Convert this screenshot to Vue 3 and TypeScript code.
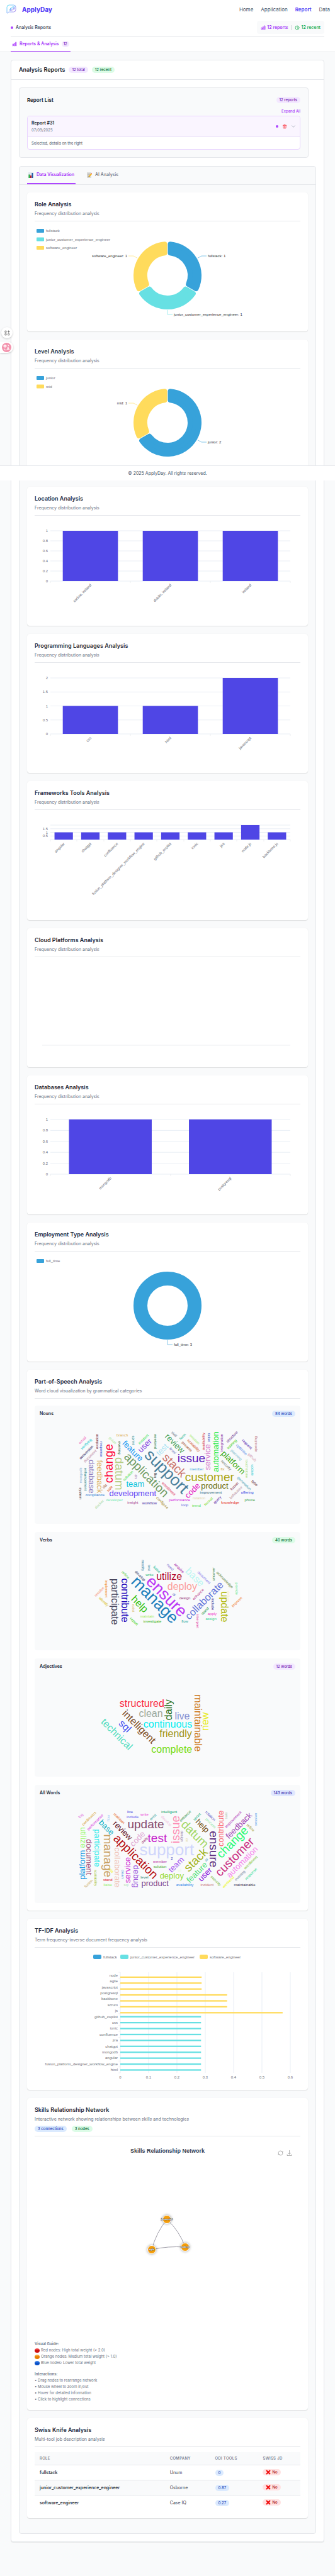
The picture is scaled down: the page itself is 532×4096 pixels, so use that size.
<script setup lang="ts">
type Word = [text: string, x: number, y: number, angle: number, level: number, color: string]

interface Cloud {
  title: string
  count: string
  tone: string
  originY: number
  sizes: number[]
  words: Word[]
}

interface Slice {
  name: string
  value: number
  color: string
}

interface BarChart {
  labels: string[]
  values: number[]
  ticks: number[]
  hidden: number[]
  base: number
}

interface Section {
  title: string
  slices?: Slice[]
  bars?: BarChart
  empty?: boolean
}

const navLinks = ['Home', 'Application', 'Report', 'Data']

const BLUE = '#37a2da'
const TEAL = '#67e0e3'
const YELLOW = '#ffdb5c'

const sections: Section[] = [
  {
    title: 'Role Analysis',
    slices: [
      { name: 'fullstack', value: 1, color: BLUE },
      { name: 'junior_customer_experience_engineer', value: 1, color: TEAL },
      { name: 'software_engineer', value: 1, color: YELLOW },
    ],
  },
  {
    title: 'Level Analysis',
    slices: [
      { name: 'junior', value: 2, color: BLUE },
      { name: 'mid', value: 1, color: YELLOW },
    ],
  },
  {
    title: 'Location Analysis',
    bars: {
      labels: ['carlow, ireland', 'dublin, ireland', 'ireland'],
      values: [1, 1, 1],
      ticks: [0, 0.2, 0.4, 0.6, 0.8, 1],
      hidden: [],
      base: 96,
    },
  },
  {
    title: 'Programming Languages Analysis',
    bars: {
      labels: ['css', 'html', 'javascript'],
      values: [1, 1, 2],
      ticks: [0, 0.5, 1, 1.5, 2],
      hidden: [],
      base: 105,
    },
  },
  {
    title: 'Frameworks Tools Analysis',
    bars: {
      labels: ['angular', 'chatgpt', 'confluence', 'fusion_platform_designer_workflow_engine', 'github_copilot', 'ionic', 'jira', 'node.js', 'backbone.js'],
      values: [1, 1, 1, 1, 1, 1, 1, 2, 1],
      ticks: [0, 0.5, 1, 1.5, 2],
      hidden: [0, 2],
      base: 39,
    },
  },
  { title: 'Cloud Platforms Analysis', empty: true },
  {
    title: 'Databases Analysis',
    bars: {
      labels: ['mongodb', 'postgresql'],
      values: [1, 1],
      ticks: [0, 0.2, 0.4, 0.6, 0.8, 1],
      hidden: [],
      base: 103,
    },
  },
  { title: 'Employment Type Analysis', slices: [{ name: 'full_time', value: 3, color: BLUE }] },
]

/* ---- donut charts ---- */
const CX = 211
const CY = 78
const OUTER = 54
const INNER = 32
const ROUND = 4

function slicePath(start: number, end: number): string {
  const r1 = OUTER - ROUND
  const r0 = INNER + ROUND
  const edge = ROUND + 0.5
  const o = Math.asin(edge / r1)
  const i = Math.asin(edge / r0)
  const at = (r: number, a: number) => `${(CX + r * Math.sin(a)).toFixed(2)} ${(CY - r * Math.cos(a)).toFixed(2)}`
  const large = end - start > Math.PI ? 1 : 0
  return `M${at(r1, start + o)}A${r1} ${r1} 0 ${large} 1 ${at(r1, end - o)}L${at(r0, end - i)}A${r0} ${r0} 0 ${large} 0 ${at(r0, start + i)}Z`
}

function donut(slices: Slice[]) {
  const total = slices.reduce((sum, s) => sum + s.value, 0)
  let angle = 0
  return slices.map((s) => {
    const start = angle
    angle += (s.value / total) * Math.PI * 2
    const mid = (start + angle) / 2
    const sx = Math.sin(mid)
    const down = Math.abs(sx) < 0.01
    const side = sx < -0.01 ? -1 : 1
    const x1 = CX + (OUTER + 1) * (down ? 0 : sx)
    const y1 = CY - (OUTER + 1) * Math.cos(mid)
    const x2 = down ? CX : CX + side * 54
    const y2 = down ? 140 : CY - 62 * Math.cos(mid)
    const x3 = x2 + side * 8
    return {
      ...s,
      path: slicePath(start, angle),
      line: `${x1},${y1} ${x2},${y2} ${x3},${y2}`,
      tx: x3 + side * 2,
      ty: y2 + 2,
      anchor: side < 0 ? 'end' : 'start',
    }
  })
}

/* ---- vertical bar charts ---- */
const LEFT = 25
const RIGHT = 406
const TOP = 16

function barY(c: BarChart, v: number): number {
  return c.base - (v / c.ticks[c.ticks.length - 1]) * (c.base - TOP)
}

function bars(c: BarChart) {
  const slot = (RIGHT - LEFT) / c.labels.length
  return c.labels.map((label, i) => ({
    label,
    x: LEFT + slot * (i + 0.155),
    w: slot * 0.69,
    cx: LEFT + slot * (i + 0.5),
    y: barY(c, c.values[i]),
  }))
}

function edges(c: BarChart): number[] {
  const slot = (RIGHT - LEFT) / c.labels.length
  return Array.from({ length: c.labels.length + 1 }, (_, i) => Math.round(LEFT + slot * i))
}

/* ---- TF-IDF ---- */
const terms: [string, number][] = [
  ['node', 0.287], ['agile', 0.287], ['javascript', 0.287], ['postgresql', 0.377], ['backbone', 0.377],
  ['scrum', 0.377], ['js', 0.573], ['github_copilot', 0.285], ['css', 0.285], ['ionic', 0.285],
  ['confluence', 0.285], ['jira', 0.285], ['chatgpt', 0.285], ['mongodb', 0.285], ['angular', 0.285],
  ['fusion_platform_designer_workflow_engine', 0.285], ['html', 0.285],
]
const TERM_X = 136
const TERM_TOP = 31
const TERM_STEP = 160 / 17
const termRows = terms.map(([name, v], i) => ({
  name,
  w: (v / 0.6) * 270,
  y: TERM_TOP + TERM_STEP * (i + 0.5),
  shift: i < 7 ? 3 : 0,
  color: i < 7 ? YELLOW : TEAL,
}))
const termLegend = [
  { name: 'fullstack', x: 93, color: BLUE },
  { name: 'junior_customer_experience_engineer', x: 136, color: TEAL },
  { name: 'software_engineer', x: 262, color: YELLOW },
]

/* ---- network ---- */
const nodes = [
  { name: 'javascript', x: 210, y: 124 },
  { name: 'agile', x: 186, y: 172 },
  { name: 'node.js', x: 239, y: 168 },
]

/* ---- word clouds: words sit on a fine layout grid, scaled to the canvas ---- */
const GRID_X = 0.2967
const GRID_Y = 0.1722
const GRID_LEFT = 73

function place(cloud: Cloud) {
  return cloud.words.map(([text, x, y, angle, level, color]) => {
    const size = cloud.sizes[level]
    const rise = /[bdfhklit0-9]/.test(text) ? 0.72 : 0.53
    const drop = /[gjpqy]/.test(text) ? 0.21 : 0
    return {
      text,
      size,
      color,
      dy: (size * (rise - drop)) / 2,
      at: `translate(${((x - GRID_LEFT) * GRID_X).toFixed(1)} ${((y - cloud.originY) * GRID_Y).toFixed(1)}) rotate(${angle})`,
    }
  })
}

const clouds: Cloud[] = [
  {
    title: 'Nouns',
    count: '84 words',
    tone: 'blue',
    originY: 168,
    sizes: [6, 13, 19, 26],
    words: [
      ['support', 748, 638, 45, 3, '#4a7f9b'], ['change', 449, 557, -90, 2, '#ff0033'], ['datum', 500, 652, 90, 2, '#b5cc85'],
      ['application', 641, 668, 45, 2, '#6f9a62'], ['issue', 885, 507, 0, 2, '#5b1bbd'], ['customer', 982, 680, 0, 2, '#a9a312'],
      ['stack', 795, 572, 45, 2, '#c9736a'], ['database', 350, 678, 90, 1, '#8e7cc0'], ['feedback', 396, 678, 90, 1, '#d9b36c'],
      ['feature', 572, 440, 45, 1, '#0d95f2'], ['user', 638, 395, -45, 1, '#8243e0'], ['test', 728, 428, -45, 1, '#a5e3f3'],
      ['review', 797, 370, 45, 1, '#3fa055'], ['service', 972, 498, -90, 1, '#d67fd0'], ['automation', 1015, 449, -90, 1, '#2aec4b'],
      ['platform', 1107, 553, 45, 1, '#35a80c'], ['team', 585, 745, 0, 1, '#09c3dc'], ['development', 571, 840, 0, 1, '#6144f5'],
      ['product', 1010, 770, 0, 1, '#6d6c0c'], ['code', 890, 806, -45, 1, '#e51ac4'], ['email', 302, 343, -45, 0, '#f06fc0'],
      ['verifying', 323, 380, -45, 0, '#22c9cf'], ['evolution', 379, 354, -90, 0, '#6b0d1b'], ['response', 400, 426, 90, 0, '#2b4fd0'],
      ['conversion', 322, 454, -45, 0, '#1d1556'], ['document', 343, 488, -45, 0, '#bd8aa5'], ['guide', 463, 346, 45, 0, '#b2e8a9'],
      ['branch', 515, 297, 0, 0, '#d9a93f'], ['evening', 498, 413, 90, 0, '#114f27'], ['sprint', 575, 341, 90, 0, '#168a88'],
      ['incident', 628, 333, -45, 0, '#4be46c'], ['weekend', 693, 354, 90, 0, '#1f7a40'], ['skill', 793, 286, 45, 0, '#62778c'],
      ['form', 838, 308, -45, 0, '#2ab58d'], ['level', 785, 438, 45, 0, '#6a72b8'], ['process', 859, 405, 45, 0, '#9b4623'],
      ['session', 903, 334, 45, 0, '#a6ea71'], ['scalability', 896, 393, 45, 0, '#d3561f'], ['availability', 950, 353, -90, 0, '#cf1230'],
      ['ticket', 981, 318, 90, 0, '#3553c4'], ['integration', 1047, 366, -90, 0, '#8127a0'], ['structure', 1102, 310, -45, 0, '#5a1e88'],
      ['training', 1103, 381, -45, 0, '#44cf20'], ['optimise', 1153, 430, 45, 0, '#5b8be8'], ['planning', 1124, 479, 45, 0, '#7ab8c9'],
      ['request', 1182, 381, 45, 0, '#5221ad'], ['operating', 1230, 378, -90, 0, '#b76b75'], ['github', 1209, 502, 45, 0, '#d39bb0'],
      ['touchstone', 1182, 606, 90, 0, '#a6dd7d'], ['update', 1209, 618, 90, 0, '#1ecbd0'], ['security', 1070, 574, 45, 0, '#76796a'],
      ['member', 913, 609, 0, 0, '#48a8dc'], ['fix', 1052, 609, 0, 0, '#d19b1c'], ['mongodb', 294, 667, -90, 0, '#84b3d6'],
      ['enhancement', 318, 702, 90, 0, '#14777a'], ['system', 289, 834, 90, 0, '#3b2020'], ['sla', 420, 766, -45, 0, '#9d4c27'],
      ['sale', 447, 790, -45, 0, '#e0521d'], ['solution', 546, 670, -45, 0, '#4be04b'], ['up', 588, 678, -90, 0, '#8460a0'],
      ['log', 692, 667, -90, 0, '#14201c'], ['compliance', 369, 850, 0, 0, '#2d78d1'], ['developer', 473, 898, 0, 0, '#6fe9b6'],
      ['docker', 392, 933, -45, 0, '#b0dbaa'], ['insight', 571, 921, 0, 0, '#a1398f'], ['workflow', 661, 921, 0, 0, '#3a1b9b'],
      ['configure', 729, 921, 45, 0, '#a3831c'], ['enrollment', 764, 790, 45, 0, '#dd2a58'], ['performance', 822, 898, 0, 0, '#cf21e0'],
      ['loop', 850, 945, 0, 0, '#5b67e0'], ['trend', 912, 945, 0, 0, '#50e04b'], ['rotation', 926, 873, 0, 0, '#ddd2ac'],
      ['format', 976, 908, -45, 0, '#7fdc38'], ['query', 1026, 897, -45, 0, '#5a24a3'], ['improvement', 989, 825, 0, 0, '#1e6578'],
      ['knowledge', 1093, 921, 0, 0, '#e1261c'], ['behaviour', 1123, 825, -45, 0, '#b78c99'], ['fusion', 1115, 766, -45, 0, '#7f2a47'],
      ['generation', 1167, 743, 45, 0, '#4b9fb5'], ['offering', 1184, 825, 0, 0, '#1c38e0'], ['type', 1223, 740, 45, 0, '#5c1730'],
      ['phone', 1198, 898, 0, 0, '#3fa447'],
    ],
  },
  {
    title: 'Verbs',
    count: '40 words',
    tone: 'green',
    originY: 192,
    sizes: [6, 16, 26],
    words: [
      ['manage', 679, 690, 45, 2, '#1e7fbd'], ['ensure', 749, 647, 45, 2, '#bb37f5'], ['participate', 471, 690, 90, 1, '#49465d'],
      ['contribute', 530, 677, 90, 1, '#2408bb'], ['utilize', 766, 457, 0, 1, '#b3082c'], ['deploy', 836, 560, 0, 1, '#fb9d9b'],
      ['base', 905, 462, 45, 1, '#bcf6f2'], ['collaborate', 953, 677, -45, 1, '#6173d9'], ['deliver', 1085, 641, 90, 0, '#fbf0b8'],
      ['update', 1058, 738, 90, 1, '#b1b808'], ['help', 606, 717, 45, 1, '#2fc20d'], ['modify', 624, 355, 90, 0, '#22759b'],
      ['test', 659, 378, 90, 0, '#4390a8'], ['liaise', 701, 391, 45, 0, '#1dbb98'], ['need', 772, 370, 45, 0, '#8079d3'],
      ['acquire', 819, 382, 45, 0, '#a20f9f'], ['refine', 533, 441, 45, 0, '#58ca47'], ['develop', 610, 454, 45, 0, '#2d3366'],
      ['write', 661, 441, 0, 0, '#28b77b'], ['document', 953, 466, 45, 0, '#8580ec'], ['uncover', 1006, 437, -90, 0, '#2a7c39'],
      ['acknowledge', 1063, 490, 45, 0, '#64853a'], ['provide', 1125, 570, 90, 0, '#62e78f'], ['implement', 429, 570, 90, 0, '#f18a1d'],
      ['resolve', 392, 598, -45, 0, '#f58b70'], ['identify', 415, 692, 45, 0, '#d8bd26'], ['enhance', 921, 622, -45, 0, '#bc4089'],
      ['ai', 793, 622, 45, 0, '#4457c4'], ['design', 850, 657, 0, 0, '#8f327d'], ['include', 1001, 713, 90, 0, '#1a1592'],
      ['stand', 957, 776, -45, 0, '#26984a'], ['apply', 996, 802, 0, 0, '#f037c7'], ['assign', 990, 850, 0, 0, '#36d18e'],
      ['interpret', 917, 870, 90, 0, '#e035a0'], ['flow', 850, 873, 0, 0, '#21a59b'], ['exist', 575, 749, 90, 0, '#d5b763'],
      ['maintain', 648, 825, 0, 0, '#98ea58'], ['investigate', 676, 873, 0, 0, '#2fb00b'], ['report', 577, 874, 45, 0, '#3fd214'],
      ['improve', 1130, 694, -45, 0, '#f0813a'],
    ],
  },
  {
    title: 'Adjectives',
    count: '12 words',
    tone: 'purple',
    originY: 186,
    sizes: [16],
    words: [
      ['structured', 620, 452, 0, 0, '#f92a42'], ['daily', 768, 515, -90, 0, '#28701a'], ['clean', 668, 547, 0, 0, '#9aa79b'],
      ['live', 836, 570, 0, 0, '#8490d2'], ['maintainable', 922, 637, 90, 0, '#ce7a1f'], ['new', 963, 623, -90, 0, '#e8eb2d'],
      ['continuous', 759, 645, 0, 0, '#04eef0'], ['friendly', 801, 745, 0, 0, '#9d9213'], ['intelligent', 602, 677, 45, 0, '#7b4a23'],
      ['sql', 527, 671, 45, 0, '#3e49f0'], ['technical', 487, 738, 45, 0, '#52ddc0'], ['complete', 780, 888, 0, 0, '#78dc0b'],
    ],
  },
  {
    title: 'All Words',
    count: '143 words',
    tone: 'indigo',
    originY: 240,
    sizes: [6, 13, 19, 26],
    words: [
      ['support', 753, 705, 0, 3, '#d0d6fb'], ['update', 641, 467, 0, 2, '#874c6d'], ['test', 703, 582, 0, 2, '#c519cb'],
      ['issue', 797, 508, -90, 2, '#fd8db6'], ['datum', 905, 548, 45, 2, '#a3d866'], ['ensure', 1000, 689, 90, 2, '#5b2b80'],
      ['change', 1108, 631, -45, 2, '#28fb74'], ['customer', 1115, 758, -45, 2, '#c92c80'], ['stack', 908, 785, -45, 2, '#a2b321'],
      ['application', 584, 763, 45, 2, '#b70d10'], ['manage', 428, 750, 90, 2, '#c9a063'], ['base', 432, 487, 45, 1, '#0fafc3'],
      ['review', 518, 515, 45, 1, '#5c0b20'], ['code', 596, 592, -45, 1, '#dfa8d4'], ['help', 942, 477, 45, 1, '#6a4707'],
      ['contribute', 1043, 498, -90, 1, '#fb6f7b'], ['feedback', 1138, 470, -45, 1, '#a145b3'], ['automation', 1156, 806, -45, 1, '#f683ec'],
      ['team', 803, 830, -45, 1, '#a04ff0'], ['feature', 914, 902, -45, 1, '#4be072'], ['user', 960, 925, -45, 1, '#8209dd'],
      ['deploy', 780, 938, 0, 1, '#96da38'], ['product', 690, 1012, 0, 1, '#7a418a'], ['debug', 586, 940, 90, 1, '#a45fdd'],
      ['service', 542, 882, -90, 1, '#ce2fd6'], ['collaborate', 490, 857, 90, 1, '#f0c5b9'], ['participate', 376, 678, 90, 1, '#34eaea'],
      ['document', 338, 762, 90, 1, '#a8577b'], ['utilize', 308, 582, 90, 1, '#a3f976'], ['platform', 305, 833, -90, 1, '#1f9ce4'],
      ['log', 294, 382, -45, 0, '#e06fdd'], ['continuous', 337, 405, -45, 0, '#d59a29'], ['performance', 371, 442, -45, 0, '#d532dd'],
      ['flow', 441, 402, -90, 0, '#97c8f8'], ['maintain', 499, 405, 45, 0, '#e66220'], ['live', 557, 345, 0, 0, '#3944e0'],
      ['include', 570, 393, 0, 0, '#5b52f0'], ['write', 634, 369, 0, 0, '#e93ad7'], ['exist', 679, 392, -45, 0, '#44a9a3'],
      ['develop', 750, 430, 45, 0, '#f1bde0'], ['intelligent', 766, 347, 0, 0, '#0ea36a'], ['enhance', 852, 382, -45, 0, '#2e9040'],
      ['sprint', 916, 392, -45, 0, '#2cb387'], ['rotation', 987, 381, 45, 0, '#5650c6'], ['process', 986, 453, 45, 0, '#94e7a8'],
      ['sale', 1069, 378, -90, 0, '#b5c7b5'], ['improvement', 1110, 417, -45, 0, '#b02fb5'], ['session', 1230, 413, -90, 0, '#5aa5ea'],
      ['refine', 1202, 489, 45, 0, '#a29a3a'], ['design', 834, 569, 90, 0, '#8a74a0'], ['up', 861, 606, -90, 0, '#e3ddae'],
      ['daily', 636, 609, -45, 0, '#a4407c'], ['2', 780, 776, 0, 0, '#3b3dbb'], ['member', 717, 801, 0, 0, '#b3249e'],
      ['solution', 717, 850, 0, 0, '#45a52a'], ['ai', 964, 786, -45, 0, '#4497b5'], ['fix', 823, 885, -45, 0, '#eafce0'],
      ['enrollment', 1202, 812, -45, 0, '#83c43c'], ['response', 1206, 922, -45, 0, '#34dd97'], ['evening', 1146, 934, -45, 0, '#7589a4'],
      ['weekend', 1082, 992, -45, 0, '#eaf80d'], ['security', 1015, 982, 45, 0, '#74b638'], ['incident', 969, 1017, 0, 0, '#c47180'],
      ['maintainable', 1170, 1017, 0, 0, '#2f2d50'], ['availability', 850, 1019, 0, 0, '#2b86e8'], ['level', 634, 945, 0, 0, '#307f74'],
      ['clean', 519, 918, 90, 0, '#5397de'], ['sla', 457, 886, 45, 0, '#f4f40a'], ['stand', 438, 969, 0, 0, '#de1234'],
      ['liaise', 438, 1017, 0, 0, '#90ee6f'], ['sql', 536, 1019, 0, 0, '#b6e0b6'], ['scalability', 372, 954, 90, 0, '#9dbd17'],
      ['fusion', 335, 1005, -45, 0, '#c9a95d'],
    ],
  },
]

const guide = [
  { color: 'red', text: 'Red nodes: High total weight (> 2.0)' },
  { color: 'orange', text: 'Orange nodes: Medium total weight (> 1.0)' },
  { color: 'blue', text: 'Blue nodes: Lower total weight' },
]
const interactions = ['Drag nodes to rearrange network', 'Mouse wheel to zoom in/out', 'Hover for detailed information', 'Click to highlight connections']

const jobs = [
  { role: 'fullstack', company: 'Unum', odi: '0' },
  { role: 'junior_customer_experience_engineer', company: 'Osborne', odi: '0.87' },
  { role: 'software_engineer', company: 'Case IQ', odi: '0.27' },
]
</script>

<template>
  <div class="page">
    <header class="topbar">
      <a class="brand" href="#">
        <svg class="logo" viewBox="0 0 32 30" aria-hidden="true">
          <defs>
            <linearGradient id="logo-stroke" x1="0" y1="0" x2="1" y2="1">
              <stop offset="0" stop-color="#3fe0f5" />
              <stop offset="0.5" stop-color="#6b9df8" />
              <stop offset="1" stop-color="#a565e8" />
            </linearGradient>
          </defs>
          <g fill="none" stroke="url(#logo-stroke)" stroke-width="1.6" stroke-linejoin="round">
            <path d="M2 28V9Q2 2 9 2H23Q30 2 30 9V17Q30 24 23 24H9Q6 24 4 27Q2 29 2 28Z" />
            <path d="M9 14v6M13 11.500v8.500M17.500 17v3" stroke-width="1.800" />
            <path d="M21 7.500a5 5 0 1 0 5 5.500h-5z" stroke-width="1.300" />
            <path d="M22.500 6.500v5h5a5 5 0 0 0-5-5z" stroke-width="1.200" />
          </g>
        </svg>
        <span>ApplyDay</span>
      </a>
      <nav class="links">
        <a v-for="link in navLinks" :key="link" href="#" :class="{ current: link === 'Report' }">{{ link }}</a>
      </nav>
    </header>

    <div class="subbar">
      <div class="status">
        <span class="status-name"><i class="dot"></i>Analysis Reports</span>
        <div class="stats">
          <span class="stat purple-text">
            <svg class="icon" viewBox="0 0 24 24"><path d="M3 13.100c0-.6.500-1.100 1.100-1.100h2.300c.6 0 1.100.5 1.100 1.100v6.800c0 .6-.5 1.100-1.100 1.100H4.100A1.100 1.100 0 0 1 3 19.900zM9.750 8.600c0-.6.500-1.100 1.100-1.100h2.300c.6 0 1.100.5 1.100 1.100v11.300c0 .6-.5 1.100-1.100 1.100h-2.300a1.100 1.100 0 0 1-1.100-1.100zM16.500 4.100c0-.6.500-1.100 1.100-1.100h2.300c.6 0 1.100.5 1.100 1.100v15.800c0 .6-.5 1.100-1.100 1.100h-2.300a1.100 1.100 0 0 1-1.100-1.100z" /></svg>
            12 reports
          </span>
          <i class="bar"></i>
          <span class="stat green-text">
            <svg class="icon" viewBox="0 0 24 24"><path d="M12 6v6l3 5M21 12a9 9 0 1 1-18 0 9 9 0 0 1 18 0z" /></svg>
            12 recent
          </span>
        </div>
      </div>
      <div class="main-tabs">
        <button class="main-tab" type="button">
          <svg class="icon" viewBox="0 0 24 24"><path d="M3 13.100c0-.6.500-1.100 1.100-1.100h2.300c.6 0 1.100.5 1.100 1.100v6.800c0 .6-.5 1.100-1.100 1.100H4.100A1.100 1.100 0 0 1 3 19.900zM9.750 8.600c0-.6.500-1.100 1.100-1.100h2.300c.6 0 1.100.5 1.100 1.100v11.300c0 .6-.5 1.100-1.100 1.100h-2.300a1.100 1.100 0 0 1-1.100-1.100zM16.500 4.100c0-.6.500-1.100 1.100-1.100h2.300c.6 0 1.100.5 1.100 1.100v15.800c0 .6-.5 1.100-1.100 1.100h-2.300a1.100 1.100 0 0 1-1.100-1.100z" /></svg>
          <span>Reports &amp; Analysis</span>
          <span class="count">12</span>
        </button>
      </div>
    </div>

    <main class="main">
      <section class="shell">
        <div class="shell-head">
          <h1>Analysis Reports</h1>
          <span class="pill purple">12 total</span>
          <span class="pill green">12 recent</span>
        </div>

        <div class="shell-body">
          <section class="list">
            <div class="list-head">
              <h2>Report List</h2>
              <span class="pill purple">12 reports</span>
            </div>
            <button class="expand" type="button">Expand All</button>
            <article class="report">
              <div class="report-head">
                <div>
                  <h3>Report #31</h3>
                  <p>07/09/2025</p>
                </div>
                <div class="report-actions">
                  <i class="dot"></i>
                  <button type="button" aria-label="Delete report">
                    <svg class="icon red" viewBox="0 0 24 24"><path d="M19 7l-.9 12.100A2 2 0 0 1 16.100 21H7.900a2 2 0 0 1-2-1.900L5 7m5 4v6m4-6v6m1-10V4a1 1 0 0 0-1-1h-4a1 1 0 0 0-1 1v3M4 7h16" /></svg>
                  </button>
                  <button type="button" aria-label="Toggle report">
                    <svg class="icon grey" viewBox="0 0 24 24"><path d="M5 8l7 8 7-8" /></svg>
                  </button>
                </div>
              </div>
              <p class="report-body">Selected, details on the right</p>
            </article>
          </section>

          <section class="data">
            <div class="data-tabs">
              <button class="data-tab on" type="button">
                <svg class="emoji" viewBox="0 0 16 18" aria-hidden="true">
                  <path d="M0 0h16v18H0z" fill="#dfe7ee" />
                  <path d="M1 7h4v11H1z" fill="#12a32a" />
                  <path d="M6 10h4v8H6z" fill="#c01722" />
                  <path d="M11 2h4v16h-4z" fill="#1a58a8" />
                </svg>
                Data Visualization
              </button>
              <button class="data-tab" type="button">
                <svg class="emoji" viewBox="0 0 16 18" aria-hidden="true">
                  <path d="M0 0h14v18H0z" fill="#dcdcd8" />
                  <path d="M2 4h9M2 7h8M2 10h6M2 13h4" stroke="#a9a9a9" />
                  <path d="M5 15l1-4 7-8 3 3-7 8z" fill="#f6b828" />
                  <path d="M13 3l3 3 0-3-1-1z" fill="#e8677c" />
                  <path d="M5 15l1-3 2 2z" fill="#4b4036" />
                </svg>
                AI Analysis
              </button>
            </div>

            <div class="cards">
              <article v-for="s in sections" :key="s.title" class="card">
                <header class="card-head">
                  <h2>{{ s.title }}</h2>
                  <p>Frequency distribution analysis</p>
                </header>

                <svg v-if="s.slices" class="chart" viewBox="0 0 422 155" role="img" :aria-label="s.title">
                  <g v-for="(item, i) in s.slices" :key="item.name">
                    <rect x="3" :y="4 + i * 13.500" width="12" height="6" rx="1" :fill="item.color" />
                    <text class="axis" x="18" :y="9 + i * 13.500">{{ item.name }}</text>
                  </g>
                  <circle v-if="s.slices.length === 1" :cx="CX" :cy="CY" r="43" fill="none" :stroke="BLUE" stroke-width="22" />
                  <g v-for="item in donut(s.slices)" :key="item.name">
                    <path v-if="s.slices.length > 1" :d="item.path" :fill="item.color" :stroke="item.color" :stroke-width="ROUND * 2" stroke-linejoin="round" />
                    <polyline :points="item.line" fill="none" :stroke="item.color" stroke-width="0.600" />
                    <text class="label" :x="item.tx" :y="item.ty" :text-anchor="item.anchor">{{ item.name }}: {{ item.value }}</text>
                  </g>
                </svg>

                <svg v-else-if="s.bars" class="chart" viewBox="0 0 422 155" role="img" :aria-label="s.title">
                  <g v-for="t in s.bars.ticks" :key="t">
                    <line :x1="LEFT" :x2="RIGHT" :y1="barY(s.bars, t)" :y2="barY(s.bars, t)" stroke="#e0e6f1" stroke-width="0.700" />
                    <text v-if="!s.bars.hidden.includes(t)" class="axis" x="21" :y="barY(s.bars, t) + 2" text-anchor="end">{{ t }}</text>
                  </g>
                  <line v-for="x in edges(s.bars)" :key="x" :x1="x" :x2="x" :y1="s.bars.base" :y2="s.bars.base + 3" stroke="#e5e7eb" stroke-width="0.700" />
                  <g v-for="b in bars(s.bars)" :key="b.label">
                    <rect :x="b.x" :y="b.y" :width="b.w" :height="s.bars.base - b.y" fill="#4f46e5" />
                    <text class="axis" text-anchor="end" :transform="`translate(${b.cx + 2} ${s.bars.base + 7}) rotate(-45)`">{{ b.label }}</text>
                  </g>
                </svg>

                <svg v-else class="chart" viewBox="0 0 422 155" role="img" :aria-label="s.title">
                  <line x1="12" x2="406" y1="132" y2="132" stroke="#e5e7eb" stroke-width="0.700" />
                </svg>
              </article>

              <article class="card">
                <header class="card-head">
                  <h2>Part-of-Speech Analysis</h2>
                  <p>Word cloud visualization by grammatical categories</p>
                </header>
                <div class="clouds">
                  <section v-for="c in clouds" :key="c.title" class="cloud">
                    <div class="cloud-head">
                      <h3>{{ c.title }}</h3>
                      <span class="pill" :class="c.tone">{{ c.count }}</span>
                    </div>
                    <svg viewBox="0 0 406 155" role="img" :aria-label="c.title">
                      <g v-for="w in place(c)" :key="w.text" :transform="w.at">
                        <text text-anchor="middle" :y="w.dy" :font-size="w.size" :fill="w.color">{{ w.text }}</text>
                      </g>
                    </svg>
                  </section>
                </div>
              </article>

              <article class="card">
                <header class="card-head">
                  <h2>TF-IDF Analysis</h2>
                  <p>Term frequency-inverse document frequency analysis</p>
                </header>
                <svg class="chart" viewBox="0 0 422 206" role="img" aria-label="TF-IDF Analysis">
                  <g v-for="l in termLegend" :key="l.name">
                    <rect :x="l.x" y="3" width="13" height="7" rx="2" :fill="l.color" />
                    <text class="axis" :x="l.x + 16" y="9">{{ l.name }}</text>
                  </g>
                  <g v-for="n in 7" :key="n">
                    <line :x1="TERM_X + (n - 1) * 45" :x2="TERM_X + (n - 1) * 45" y1="31" y2="191" stroke="#e0e6f1" stroke-width="0.700" />
                    <text class="axis" :x="TERM_X + (n - 1) * 45" y="200" text-anchor="middle">{{ (n - 1) / 10 }}</text>
                  </g>
                  <line v-for="n in 18" :key="n" x1="133" x2="136" :y1="TERM_TOP + (n - 1) * TERM_STEP" :y2="TERM_TOP + (n - 1) * TERM_STEP" stroke="#e5e7eb" stroke-width="0.600" />
                  <g v-for="t in termRows" :key="t.name">
                    <rect :x="TERM_X" :y="t.y + t.shift - 1" :width="t.w" height="2.300" :fill="t.color" />
                    <text class="axis" x="132" :y="t.y + 2" text-anchor="end">{{ t.name }}</text>
                  </g>
                </svg>
              </article>

              <article class="card">
                <header class="card-head">
                  <h2>Skills Relationship Network</h2>
                  <p>Interactive network showing relationships between skills and technologies</p>
                  <div class="badges">
                    <span class="pill blue">3 connections</span>
                    <span class="pill green">3 nodes</span>
                  </div>
                </header>
                <div class="network">
                  <svg class="chart" viewBox="0 0 422 310" role="img" aria-label="Skills Relationship Network">
                    <text class="net-title" x="211" y="18" text-anchor="middle">Skills Relationship Network</text>
                    <g fill="none" stroke="#84828f" stroke-width="0.800">
                      <path d="M186 172Q193 145 210 124" />
                      <path d="M210 124Q230 142 239 168" />
                      <path d="M186 172Q212 166 239 168" />
                    </g>
                    <g v-for="n in nodes" :key="n.name">
                      <circle class="node" :cx="n.x" :cy="n.y" r="6.500" />
                      <text class="node-name" :x="n.x" :y="n.y + 1" text-anchor="middle">{{ n.name }}</text>
                    </g>
                  </svg>
                  <div class="tools">
                    <button type="button" aria-label="Restore">
                      <svg viewBox="0 0 18 18"><path d="M3 12a7 7 0 0 1 1-8 7 7 0 0 1 11 2M15 6a7 7 0 0 1-1 8 7 7 0 0 1-11-2M1 15l2-3 3 2M17 3l-2 3-3-2" /></svg>
                    </button>
                    <button type="button" aria-label="Save as image">
                      <svg viewBox="0 0 18 18"><path d="M9 0v12M4 8l5 5 5-5M2 13v4h14v-4" /></svg>
                    </button>
                  </div>
                </div>
                <div class="notes">
                  <strong>Visual Guide:</strong>
                  <p v-for="g in guide" :key="g.color"><i class="ball" :class="g.color"></i>{{ g.text }}</p>
                </div>
                <div class="notes">
                  <strong>Interactions:</strong>
                  <p v-for="t in interactions" :key="t">• {{ t }}</p>
                </div>
              </article>

              <article class="card">
                <header class="card-head">
                  <h2>Swiss Knife Analysis</h2>
                  <p>Multi-tool job description analysis</p>
                </header>
                <table class="jobs">
                  <thead>
                    <tr><th>Role</th><th>Company</th><th>ODI Tools</th><th>Swiss JD</th></tr>
                  </thead>
                  <tbody>
                    <tr v-for="j in jobs" :key="j.role">
                      <td class="role">{{ j.role }}</td>
                      <td>{{ j.company }}</td>
                      <td><span class="pill blue">{{ j.odi }}</span></td>
                      <td>
                        <span class="pill red-pill">
                          <svg class="cross" viewBox="0 0 8 8" aria-hidden="true"><path d="M1 1l6 6M7 1L1 7" /></svg>No
                        </span>
                      </td>
                    </tr>
                  </tbody>
                </table>
              </article>
            </div>
          </section>
        </div>
      </section>
    </main>

    <footer class="footer">© 2025 ApplyDay. All rights reserved.</footer>

    <button class="float grid-button" type="button" aria-label="Apps">
      <svg viewBox="0 0 16 16"><path d="M1.500 2h4v4h-4zM1.500 10h4v4h-4zM10 10h4v4h-4z" fill="none" stroke="#777" stroke-width="1.500" /><path d="M12 0l1.200 2.800L16 4l-2.800 1.200L12 8l-1.200-2.800L8 4l2.800-1.200z" fill="#777" /></svg>
    </button>
    <button class="float translate-button" type="button" aria-label="Translate">
      <svg viewBox="0 0 30 30">
        <circle cx="15" cy="15" r="15" fill="#f393ad" />
        <g fill="none" stroke="#fff" stroke-width="2">
          <path d="M6 8.500h8v4H6zM10 5.500v10.500M15.500 23.500l4-10 4 10M17 20.500h5M18 7q4 0 4 4M7 18.500q0 4.500 5 4.500" />
        </g>
      </svg>
    </button>
  </div>
</template>

<style>
body {
  margin: 0;
  background: #f9fafb;
}
</style>

<style scoped>
.page {
  position: relative;
  font-family: Inter, "Liberation Sans", sans-serif;
  font-size: 7px;
  line-height: 10px;
  color: #1e2939;
  background: #f9fafb;
}
.page *,
.page *::before {
  box-sizing: border-box;
}
h1, h2, h3, p {
  margin: 0;
}
button {
  font: inherit;
  color: inherit;
  border: 0;
  padding: 0;
  background: none;
}
svg {
  display: block;
}
a {
  text-decoration: none;
}
.icon {
  width: 8px;
  height: 8px;
  flex: none;
  fill: none;
  stroke: currentColor;
  stroke-width: 2;
  stroke-linecap: round;
  stroke-linejoin: round;
}
.dot {
  width: 4px;
  height: 4px;
  border-radius: 50%;
  background: #ad46ff;
}

/* top bar */
.topbar {
  display: flex;
  align-items: center;
  justify-content: space-between;
  height: 29px;
  padding: 0 8px 0 10px;
  background: #fff;
}
.brand {
  display: flex;
  align-items: center;
  gap: 9px;
  font-size: 10px;
  font-weight: 700;
  color: #4f39f6;
}
.logo {
  width: 16px;
  height: 15px;
}
.links {
  display: flex;
  gap: 12px;
  font-size: 8px;
}
.links a {
  color: #4a5565;
}
.links .current {
  font-weight: 600;
  color: #4f39f6;
}

/* sub bar */
.subbar {
  padding: 4px 17px 0;
  background: #fff;
  border-bottom: 1px solid #e5e7eb;
}
.status {
  display: flex;
  align-items: center;
  justify-content: space-between;
  padding-bottom: 4px;
  border-bottom: 1px solid #e5e7eb;
}
.status-name {
  display: flex;
  align-items: center;
  gap: 4px;
  font-weight: 500;
  color: #364153;
}
.stats {
  display: flex;
  align-items: center;
  gap: 5px;
  height: 21px;
  padding: 0 6px;
  border-radius: 4px;
  background: #f9fafb;
  font-weight: 500;
}
.stat {
  display: flex;
  align-items: center;
  gap: 2px;
}
.purple-text {
  color: #9810fa;
}
.green-text {
  color: #00a63e;
}
.bar {
  width: 1px;
  height: 8px;
  background: #d1d5dc;
}
.main-tabs {
  display: flex;
}
.main-tab {
  display: flex;
  align-items: center;
  gap: 4px;
  height: 23px;
  padding: 0 2px;
  border-bottom: 1px solid #ad46ff;
  font-weight: 500;
  color: #9810fa;
}
.count {
  padding: 0 3px;
  border-radius: 5px;
  background: #f3e8ff;
  font-size: 6px;
  line-height: 10px;
  color: #6e11b0;
}

/* shell */
.main {
  padding: 12px 17px 54px;
}
.shell {
  border: 1px solid #e5e7eb;
  border-radius: 4px;
  background: #fff;
  box-shadow: 0 1px 1px rgba(0, 0, 0, 0.08);
}
.shell-head {
  display: flex;
  align-items: center;
  gap: 6px;
  height: 31px;
  padding: 0 12px;
  border-bottom: 1px solid #e5e7eb;
}
.shell-head h1 {
  font-size: 9px;
  font-weight: 600;
  color: #101828;
}
.pill {
  display: inline-block;
  padding: 0 5px;
  border-radius: 5px;
  font-size: 6px;
  font-weight: 500;
  line-height: 10px;
  white-space: nowrap;
}
.purple {
  background: #f3e8ff;
  color: #6e11b0;
}
.pill.green {
  background: #dcfce7;
  color: #016630;
}
.pill.blue {
  background: #dbeafe;
  color: #193cb8;
}
.indigo {
  background: #e0e7ff;
  color: #372aac;
}
.red-pill {
  background: #ffe2e2;
  color: #9f0712;
}
.shell-body {
  padding: 12px;
}

/* report list */
.list {
  margin: 0 12px 13px 0;
  padding: 12px;
  border: 1px solid #e5e7eb;
  border-radius: 4px;
  background: #f9fafb;
}
.list-head {
  display: flex;
  align-items: center;
  justify-content: space-between;
  height: 14px;
}
.list-head h2 {
  font-size: 8px;
  font-weight: 600;
  color: #101828;
}
.expand {
  display: block;
  margin: 7px 0 3px auto;
  font-size: 6px;
  line-height: 8px;
  color: #9810fa;
}
.report {
  border: 1px solid #e9d4ff;
  border-radius: 4px;
  background: #fff;
  overflow: hidden;
}
.report-head {
  display: flex;
  align-items: center;
  justify-content: space-between;
  height: 33px;
  padding: 0 6px;
  border-bottom: 1px solid #e9e0f8;
  background: #faf5ff;
}
.report-head h3 {
  font-size: 7px;
  font-weight: 600;
  color: #101828;
}
.report-head p {
  margin-top: 2px;
  font-size: 6px;
  line-height: 8px;
  color: #6a7282;
}
.report-actions {
  display: flex;
  align-items: center;
  gap: 6px;
}
.report-actions .icon {
  stroke-width: 2;
}
.red {
  color: #fb2c36;
}
.icon.grey {
  color: #99a1af;
}
.report-body {
  padding: 0 6px;
  font-size: 6px;
  line-height: 19px;
  color: #4a5565;
}

/* data panel */
.data {
  padding-bottom: 12px;
  border: 1px solid #e5e7eb;
  border-radius: 4px;
  background: #f9fafb;
}
.data-tabs {
  display: flex;
  gap: 16px;
  height: 29px;
  padding: 0 12px;
  border-bottom: 1px solid #e5e7eb;
}
.data-tab {
  display: flex;
  align-items: center;
  gap: 5px;
  padding: 0 2px;
  border-bottom: 2px solid transparent;
  font-weight: 500;
  color: #6a7282;
}
.data-tab.on {
  border-color: #ad46ff;
  color: #9810fa;
}
.emoji {
  width: 8px;
  height: 9px;
}
.cards {
  display: grid;
  gap: 13px;
  padding: 12px;
}
.card {
  min-width: 0;
  padding: 12px;
  border-radius: 4px;
  background: #fff;
  box-shadow: 0 0 1px rgba(0, 0, 0, 0.1), 0 1px 1px rgba(0, 0, 0, 0.1);
}
.card-head {
  margin-bottom: 8px;
  padding-bottom: 6px;
  border-bottom: 1px solid #e5e7eb;
}
.card-head h2 {
  font-size: 9px;
  font-weight: 600;
  line-height: 14px;
}
.card-head p {
  margin-top: 3px;
  color: #6a7282;
}
.badges {
  display: flex;
  gap: 8px;
  margin-top: 5px;
}
.chart {
  width: 100%;
  height: auto;
}
.axis {
  font: 6px "Liberation Sans", sans-serif;
  fill: #6e7079;
}
.label {
  font: 6px "Liberation Sans", sans-serif;
  fill: #333;
}

/* word clouds */
.clouds {
  display: grid;
  gap: 13px;
  margin-top: 11px;
}
.cloud {
  padding: 8px;
  border-radius: 4px;
  background: #f9fafb;
}
.cloud-head {
  display: flex;
  align-items: center;
  justify-content: space-between;
  height: 10px;
  margin-bottom: 7px;
}
.cloud-head h3 {
  font-size: 7px;
  font-weight: 600;
}
.cloud svg {
  width: 100%;
  height: auto;
  font-family: "Liberation Sans", sans-serif;
}

/* network */
.network {
  position: relative;
  margin-bottom: 7px;
}
.net-title {
  font: 700 9px "Liberation Sans", sans-serif;
  fill: #374151;
}
.node {
  fill: #f59e0b;
  stroke: #fff;
  stroke-width: 1;
  filter: drop-shadow(0 0 2px rgba(0, 0, 0, 0.4));
}
.node-name {
  font: 700 4px "Liberation Sans", sans-serif;
  fill: #fff;
  stroke: #444;
  stroke-width: 0.6;
  paint-order: stroke;
}
.tools {
  position: absolute;
  top: 14px;
  right: 13px;
  display: flex;
  gap: 5px;
}
.tools svg {
  width: 9px;
  height: 9px;
  fill: none;
  stroke: #666;
  stroke-width: 1;
}
.notes {
  font-size: 6px;
  color: #6a7282;
}
.notes + .notes {
  margin-top: 8px;
}
.notes strong {
  display: block;
  font-weight: 600;
}
.notes p {
  display: flex;
  align-items: center;
  gap: 2px;
}
.ball {
  width: 8px;
  height: 7px;
  border-radius: 50%;
}
.ball.red {
  background: linear-gradient(#f66, #d01212 50%);
}
.ball.orange {
  background: linear-gradient(#ffc25a, #e87d00 50%);
}
.ball.blue {
  background: linear-gradient(#4d94f5, #0a51c8 50%);
}

/* table */
.jobs {
  width: 100%;
  table-layout: fixed;
  border-collapse: separate;
  border-spacing: 0;
  text-align: left;
}
.jobs th {
  height: 21px;
  padding: 0 8px;
  border-bottom: 1px solid #e5e7eb;
  background: #f9fafb;
  font-size: 6px;
  font-weight: 500;
  letter-spacing: 0.05em;
  text-transform: uppercase;
  color: #6a7282;
}
.jobs th:nth-child(1) {
  width: 49%;
}
.jobs th:nth-child(2) {
  width: 17%;
}
.jobs th:nth-child(3) {
  width: 18%;
}
.jobs td {
  height: 24px;
  padding: 0 8px;
  border-bottom: 1px solid #e5e7eb;
  color: #364153;
}
.jobs tr:last-child td {
  border-bottom-color: transparent;
}
.jobs tbody tr:nth-child(2) td {
  background: #f9fafb;
}
.jobs .role {
  font-weight: 500;
  color: #101828;
}
.red-pill {
  display: inline-flex;
  align-items: center;
  gap: 2px;
}
.cross {
  width: 8px;
  height: 8px;
  stroke: #f00b0b;
  stroke-width: 2;
}

/* overlays */
.footer {
  position: absolute;
  top: 740px;
  left: 0;
  right: 0;
  height: 24px;
  border-top: 1px solid #e5e7eb;
  background: #fff;
  line-height: 23px;
  text-align: center;
  color: #4a5565;
}
.float {
  position: absolute;
  display: flex;
  align-items: center;
  background: #fff;
  box-shadow: 0 1px 3px rgba(0, 0, 0, 0.2);
}
.grid-button {
  top: 520px;
  left: 2px;
  width: 18px;
  height: 18px;
  justify-content: center;
  border-radius: 50%;
}
.grid-button svg {
  width: 9px;
  height: 9px;
}
.translate-button {
  top: 543px;
  left: 0;
  width: 21px;
  height: 18px;
  justify-content: flex-end;
  padding-right: 3px;
  border-radius: 0 9px 9px 0;
}
.translate-button svg {
  width: 15px;
  height: 15px;
}
</style>
